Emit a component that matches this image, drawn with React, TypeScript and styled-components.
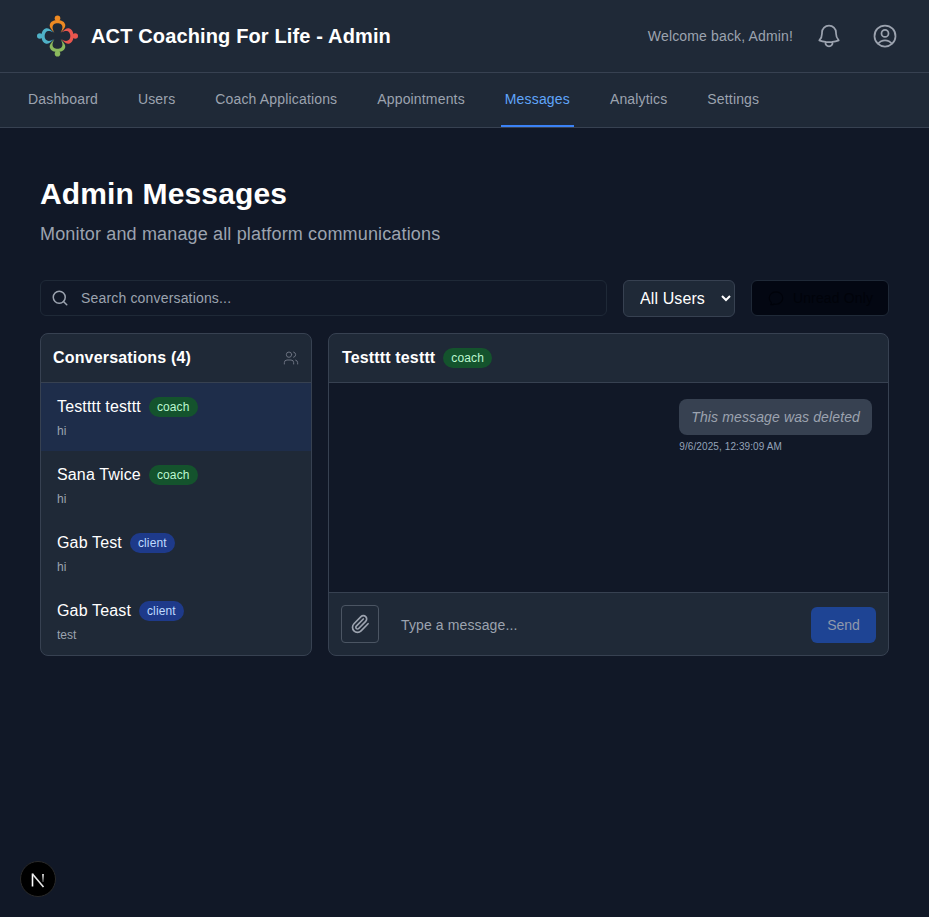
import { HiOutlineBell, HiOutlineChatBubbleOvalLeft, HiOutlineUserCircle } from "react-icons/hi2";
import { Paperclip, Search, Users } from "lucide-react";
import styled, { createGlobalStyle } from "styled-components";

const GlobalStyle = createGlobalStyle`
  html, body {
    margin: 0;
    background: #111827;
  }
  * {
    box-sizing: border-box;
  }
  body {
    font-family: "Liberation Sans", Arial, sans-serif;
    color: #ffffff;
  }
`;

const Page = styled.div`
  min-height: 917px;
  background: #111827;
`;

const TopBar = styled.header`
  display: flex;
  align-items: center;
  justify-content: space-between;
  height: 73px;
  padding: 0 24px;
  background: #1f2937;
  border-bottom: 1px solid #374151;
`;

const Brand = styled.div`
  display: flex;
  align-items: center;
`;

const BrandName = styled.h1`
  margin: 0;
  font-size: 20px;
  line-height: 28px;
  font-weight: 700;
  letter-spacing: 0.14px;
`;

const UserArea = styled.div`
  display: flex;
  align-items: center;
  gap: 16px;
`;

const Welcome = styled.span`
  font-size: 14px;
  letter-spacing: 0.15px;
  color: #9ca3af;
`;

const IconButton = styled.button`
  display: flex;
  padding: 6px;
  border: none;
  background: none;
  color: #9ca3af;
`;

const Nav = styled.nav`
  display: flex;
  gap: 32px;
  height: 55px;
  padding: 0 24px;
  background: #1f2937;
  border-bottom: 1px solid #374151;
`;

const NavItem = styled.a<{ $active?: boolean }>`
  display: flex;
  align-items: center;
  height: 54px;
  padding: 0 4px;
  font-size: 14px;
  letter-spacing: 0.16px;
  color: ${({ $active }) => ($active ? "#60a5fa" : "#9ca3af")};
  border-bottom: 2px solid ${({ $active }) => ($active ? "#3b82f6" : "transparent")};
`;

const Main = styled.main`
  padding: 48px 40px 0;
`;

const Title = styled.h2`
  margin: 0;
  font-size: 30px;
  line-height: 36px;
  font-weight: 700;
  letter-spacing: 0.15px;
`;

const Subtitle = styled.p`
  margin: 8px 0 0;
  font-size: 18px;
  line-height: 28px;
  letter-spacing: 0.155px;
  color: #9ca3af;
`;

const Filters = styled.div`
  display: flex;
  align-items: flex-start;
  gap: 16px;
  margin-top: 32px;
`;

const SearchBox = styled.div`
  display: flex;
  flex: 1;
  align-items: center;
  gap: 12px;
  height: 36px;
  padding: 0 10px;
  font-size: 14px;
  letter-spacing: 0.17px;
  color: #9ca3af;
  border: 1px solid #1f2937;
  border-radius: 6px;
  background: #111827;
`;

const SearchIcon = styled(Search)`
  flex: none;
  color: #9ca3af;
`;

const RoleSelect = styled.select`
  width: 112px;
  height: 37px;
  padding: 0 8px 0 12px;
  font-family: inherit;
  font-size: 16px;
  letter-spacing: 0.1px;
  color: #ffffff;
  background: #1f2937;
  border: 1px solid #374151;
  border-radius: 6px;
`;

const UnreadButton = styled.button`
  display: flex;
  align-items: center;
  justify-content: center;
  gap: 8px;
  width: 138px;
  height: 36px;
  font-family: inherit;
  font-size: 14px;
  letter-spacing: 0.14px;
  color: #01030a;
  background: #030712;
  border: 1px solid #1f2937;
  border-radius: 6px;
`;

const Columns = styled.div`
  display: grid;
  grid-template-columns: 272px 1fr;
  gap: 16px;
  margin-top: 16px;
`;

const Panel = styled.section`
  display: flex;
  flex-direction: column;
  height: 323px;
  overflow: hidden;
  background: #1f2937;
  border: 1px solid #374151;
  border-radius: 8px;
`;

const PanelHead = styled.div`
  display: flex;
  align-items: center;
  justify-content: space-between;
  height: 49px;
  flex: none;
  padding: 0 12px;
  border-bottom: 1px solid #374151;
`;

const PanelTitle = styled.h3`
  margin: 0;
  font-size: 16px;
  font-weight: 700;
  letter-spacing: 0.17px;
`;

const MutedUsers = styled(Users)`
  color: #6b7280;
`;

const ConversationRow = styled.div<{ $selected?: boolean }>`
  height: 68px;
  padding: 12px 16px 0;
  background: ${({ $selected }) => ($selected ? "#1e2d4a" : "transparent")};
`;

const NameLine = styled.div`
  display: flex;
  align-items: center;
  gap: 8px;
  height: 24px;
  font-size: 16px;
  letter-spacing: 0.15px;
`;

const RoleBadge = styled.span<{ $role: "coach" | "client" }>`
  padding: 2px 8px;
  font-size: 12px;
  font-weight: 400;
  line-height: 16px;
  letter-spacing: 0.12px;
  border-radius: 999px;
  color: ${({ $role }) => ($role === "coach" ? "#bbf7d0" : "#bfdbfe")};
  background: ${({ $role }) => ($role === "coach" ? "#14532d" : "#1e3a8a")};
`;

const Preview = styled.p`
  margin: 4px 0 0;
  font-size: 12px;
  line-height: 16px;
  color: #9ca3af;
`;

const ChatHeadLine = styled.div`
  display: flex;
  align-items: center;
  gap: 8px;
  padding-left: 1px;
  font-size: 16px;
  font-weight: 700;
  letter-spacing: 0.15px;
`;

const ChatBody = styled.div`
  display: flex;
  flex: 1;
  flex-direction: column;
  align-items: flex-end;
  padding: 16px;
  background: #111827;
`;

const MessageStack = styled.div`
  display: flex;
  flex-direction: column;
  align-items: flex-start;
`;

const Bubble = styled.div`
  padding: 8px 12px;
  font-size: 14px;
  font-style: italic;
  line-height: 20px;
  letter-spacing: 0.125px;
  color: #9ca3af;
  background: #374151;
  border-radius: 8px;
`;

const Timestamp = styled.span`
  margin-top: 4px;
  font-size: 10px;
  line-height: 15px;
  letter-spacing: 0.1px;
  color: #94a3b8;
`;

const Composer = styled.div`
  display: flex;
  align-items: flex-end;
  height: 63px;
  flex: none;
  gap: 12px;
  padding: 0 12px 12px;
  border-top: 1px solid #374151;
`;

const AttachButton = styled.button`
  display: flex;
  align-items: center;
  justify-content: center;
  flex: none;
  width: 38px;
  height: 38px;
  color: #9ca3af;
  background: none;
  border: 1px solid #4b5563;
  border-radius: 4px;
`;

const ComposerField = styled.div`
  display: flex;
  align-items: center;
  flex: 1;
  height: 36px;
  padding: 0 10px;
  font-size: 14px;
  letter-spacing: 0.12px;
  color: #9ca3af;
`;

const SendButton = styled.button`
  width: 65px;
  height: 36px;
  font-family: inherit;
  font-size: 14px;
  font-weight: 500;
  color: #8f98ab;
  background: #1e4494;
  border: none;
  border-radius: 6px;
`;

const DevBadge = styled.div`
  position: fixed;
  left: 20px;
  bottom: 20px;
  display: flex;
  align-items: center;
  justify-content: center;
  width: 36px;
  height: 36px;
  background: #000000;
  border: 1px solid #2a2a2a;
  border-radius: 50%;
`;

const navItems = ["Dashboard", "Users", "Coach Applications", "Appointments", "Messages", "Analytics", "Settings"];

const conversations: { name: string; role: "coach" | "client"; preview: string }[] = [
  { name: "Testttt testtt", role: "coach", preview: "hi" },
  { name: "Sana Twice", role: "coach", preview: "hi" },
  { name: "Gab Test", role: "client", preview: "hi" },
  { name: "Gab Teast", role: "client", preview: "test" },
];

const figures = [
  { angle: 0, color: "#ef8a22" },
  { angle: 90, color: "#e9564e" },
  { angle: 180, color: "#8bb95d" },
  { angle: 270, color: "#4fb1c7" },
];

const Logo = () => (
  <svg width="67" height="48" viewBox="-33.5 -24 67 48">
    {figures.map(({ angle, color }) => (
      <g key={angle} transform={`rotate(${angle})`} fill={color}>
        <circle cx="0" cy="-17.7" r="2.8" />
        <path d="M-3 -3.5 C-7 -7 -8.5 -10 -7.5 -12 C-6.5 -15 -3 -16 0 -16 C3 -16 6.5 -15 7.5 -12 C8.5 -10 7 -7 3 -3.5 C5.5 -7 5.5 -10 3.6 -11.8 C1.8 -13.2 -1.8 -13.2 -3.6 -11.8 C-5.5 -10 -5.5 -7 -3 -3.5 Z" />
      </g>
    ))}
  </svg>
);

const App = () => (
  <Page>
    <GlobalStyle />
    <TopBar>
      <Brand>
        <Logo />
        <BrandName>ACT Coaching For Life - Admin</BrandName>
      </Brand>
      <UserArea>
        <Welcome>Welcome back, Admin!</Welcome>
        <IconButton>
          <HiOutlineBell size={28} />
        </IconButton>
        <IconButton>
          <HiOutlineUserCircle size={28} />
        </IconButton>
      </UserArea>
    </TopBar>
    <Nav>
      {navItems.map((label) => (
        <NavItem key={label} $active={label === "Messages"}>
          {label}
        </NavItem>
      ))}
    </Nav>
    <Main>
      <Title>Admin Messages</Title>
      <Subtitle>Monitor and manage all platform communications</Subtitle>
      <Filters>
        <SearchBox>
          <SearchIcon size={18} />
          Search conversations...
        </SearchBox>
        <RoleSelect defaultValue="all">
          <option value="all">All Users</option>
        </RoleSelect>
        <UnreadButton>
          <HiOutlineChatBubbleOvalLeft size={18} />
          Unread Only
        </UnreadButton>
      </Filters>
      <Columns>
        <Panel>
          <PanelHead>
            <PanelTitle>Conversations (4)</PanelTitle>
            <MutedUsers size={16} strokeWidth={1.5} />
          </PanelHead>
          {conversations.map((c, i) => (
            <ConversationRow key={c.name} $selected={i === 0}>
              <NameLine>
                {c.name}
                <RoleBadge $role={c.role}>{c.role}</RoleBadge>
              </NameLine>
              <Preview>{c.preview}</Preview>
            </ConversationRow>
          ))}
        </Panel>
        <Panel>
          <PanelHead>
            <ChatHeadLine>
              Testttt testtt
              <RoleBadge $role="coach">coach</RoleBadge>
            </ChatHeadLine>
          </PanelHead>
          <ChatBody>
            <MessageStack>
              <Bubble>This message was deleted</Bubble>
              <Timestamp>9/6/2025, 12:39:09 AM</Timestamp>
            </MessageStack>
          </ChatBody>
          <Composer>
            <AttachButton>
              <Paperclip size={20} />
            </AttachButton>
            <ComposerField>Type a message...</ComposerField>
            <SendButton>Send</SendButton>
          </Composer>
        </Panel>
      </Columns>
    </Main>
    <DevBadge>
      <svg width="18" height="18" viewBox="0 0 18 18" fill="none">
        <defs>
          <linearGradient id="next-fade" x1="0" y1="0" x2="0" y2="1">
            <stop offset="0" stopColor="#ffffff" />
            <stop offset="1" stopColor="#ffffff" stopOpacity="0.25" />
          </linearGradient>
        </defs>
        <path d="M3.5 3.5 V16.5" stroke="#ffffff" strokeWidth="1.6" />
        <path d="M3.5 4 L14.5 17" stroke="#e8e8e8" strokeWidth="1.6" />
        <rect x="13.2" y="4" width="1.6" height="8" fill="url(#next-fade)" />
      </svg>
    </DevBadge>
  </Page>
);

export default App;
